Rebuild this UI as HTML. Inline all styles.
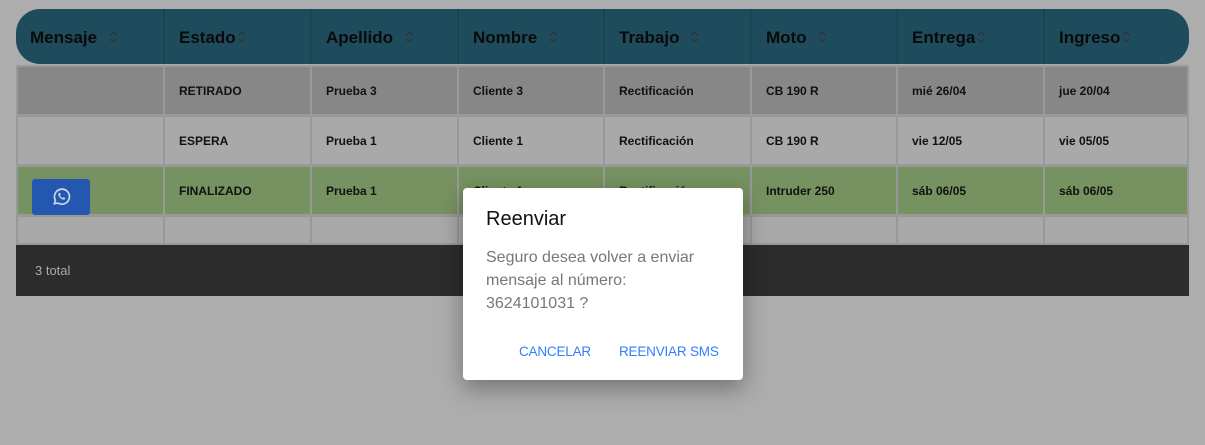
<!DOCTYPE html>
<html><head><meta charset="utf-8"><style>
body{margin:0;width:1205px;height:445px;background:#adadad;font-family:"Liberation Sans",Arial,sans-serif;position:relative;overflow:hidden}
.hdr{position:absolute;left:16px;top:9px;width:1173px;height:55px;background:#1e4c5d;border-radius:24px;}
.hdr div{position:absolute;top:0;height:55px;line-height:57px;font-weight:bold;font-size:17px;color:#0a0a0a;padding-left:14px;box-sizing:border-box;border-left:2px solid #1b4555;white-space:nowrap}
.hdr div:first-child{border-left:none}
.hdr svg{margin-left:7px;vertical-align:-1px}
.row{position:absolute;left:16px;width:1173px}
.row div{position:absolute;top:0;bottom:0;box-sizing:border-box;border:2px solid #999;border-right:none;padding-left:14px;font-weight:bold;font-size:12px;color:#111;display:flex;align-items:center}
.foot{position:absolute;left:16px;top:245px;width:1173px;height:51px;background:#2c2c2c;color:#aaa;font-size:13px;line-height:51px;padding-left:19px;box-sizing:border-box}
.modal{position:absolute;left:463px;top:188px;width:280px;height:192px;background:#fff;border-radius:4px;box-shadow:0 8px 24px rgba(0,0,0,.35)}
.modal h3{margin:0;position:absolute;left:23px;top:20px;font-size:20px;font-weight:normal;color:#111}
.modal p{margin:0;position:absolute;left:23px;top:58px;font-size:16px;line-height:23px;color:#777;width:215px}
.btn{position:absolute;top:156px;font-size:13.5px;color:#2f7fff;letter-spacing:-0.2px}
</style></head><body>
<svg width="0" height="0" style="position:absolute"><defs><symbol id="s" viewBox="0 0 8 14"><path d="M1 5l3-3 3 3M1 9l3 3 3-3" fill="none" stroke="#333" stroke-width="1.3"/></symbol></defs></svg>
<div class="hdr">
<div style="left:0;width:147px">Mensaje <svg width="8" height="14"><use href="#s"/></svg></div>
<div style="left:147px;width:147px">Estado<svg width="8" height="14" style="margin-left:2px"><use href="#s"/></svg></div>
<div style="left:294px;width:147px">Apellido <svg width="8" height="14"><use href="#s"/></svg></div>
<div style="left:441px;width:146px">Nombre <svg width="8" height="14"><use href="#s"/></svg></div>
<div style="left:587px;width:147px">Trabajo <svg width="8" height="14"><use href="#s"/></svg></div>
<div style="left:734px;width:146px">Moto <svg width="8" height="14"><use href="#s"/></svg></div>
<div style="left:880px;width:147px">Entrega<svg width="8" height="14" style="margin-left:2px"><use href="#s"/></svg></div>
<div style="left:1027px;width:146px">Ingreso<svg width="8" height="14" style="margin-left:2px"><use href="#s"/></svg></div>
</div>

<div class="row" style="top:65px;height:51px;background:#878787">
<div style="left:0;width:147px"></div><div style="left:147px;width:147px">RETIRADO</div><div style="left:294px;width:147px">Prueba 3</div><div style="left:441px;width:146px">Cliente 3</div><div style="left:587px;width:147px">Rectificación</div><div style="left:734px;width:146px">CB 190 R</div><div style="left:880px;width:147px">mié 26/04</div><div style="left:1027px;width:146px;border-right:2px solid #999">jue 20/04</div>
</div>
<div class="row" style="top:115px;height:51px;background:#a9a9a9">
<div style="left:0;width:147px"></div><div style="left:147px;width:147px">ESPERA</div><div style="left:294px;width:147px">Prueba 1</div><div style="left:441px;width:146px">Cliente 1</div><div style="left:587px;width:147px">Rectificación</div><div style="left:734px;width:146px">CB 190 R</div><div style="left:880px;width:147px">vie 12/05</div><div style="left:1027px;width:146px;border-right:2px solid #999">vie 05/05</div>
</div>
<div class="row" style="top:165px;height:51px;background:#779261">
<div style="left:0;width:147px"><span style="position:absolute;left:14px;top:12px;width:58px;height:36px;background:#2357b0;border-radius:3px;display:flex;align-items:center;justify-content:center"><svg width="20" height="20" viewBox="0 0 24 24" fill="none" stroke="#cfd8e8" stroke-width="2"><path d="M4 20l1.3-4A9 9 0 1 1 8.5 19.3Z"/><path d="M9 8c0 4 3 7 7 7l1-1.5-2-1-1 1c-1.5-.5-3-2-3.5-3.5l1-1-1-2z" fill="#cfd8e8" stroke-width="0.5"/></svg></span></div><div style="left:147px;width:147px">FINALIZADO</div><div style="left:294px;width:147px">Prueba 1</div><div style="left:441px;width:146px">Cliente 1</div><div style="left:587px;width:147px">Rectificación</div><div style="left:734px;width:146px">Intruder 250</div><div style="left:880px;width:147px">sáb 06/05</div><div style="left:1027px;width:146px;border-right:2px solid #999">sáb 06/05</div>
</div>
<div class="row" style="top:215px;height:30px;background:#a9a9a9">
<div style="left:0;width:147px"></div><div style="left:147px;width:147px"></div><div style="left:294px;width:147px"></div><div style="left:441px;width:146px"></div><div style="left:587px;width:147px"></div><div style="left:734px;width:146px"></div><div style="left:880px;width:147px"></div><div style="left:1027px;width:146px;border-right:2px solid #999"></div>
</div>
<div class="foot">3 total</div>

<div class="modal">
<h3>Reenviar</h3>
<p>Seguro desea volver a enviar mensaje al número:<br>3624101031 ?</p>
<span class="btn" style="left:56px">CANCELAR</span>
<span class="btn" style="left:156px">REENVIAR SMS</span>
</div>
</body></html>
